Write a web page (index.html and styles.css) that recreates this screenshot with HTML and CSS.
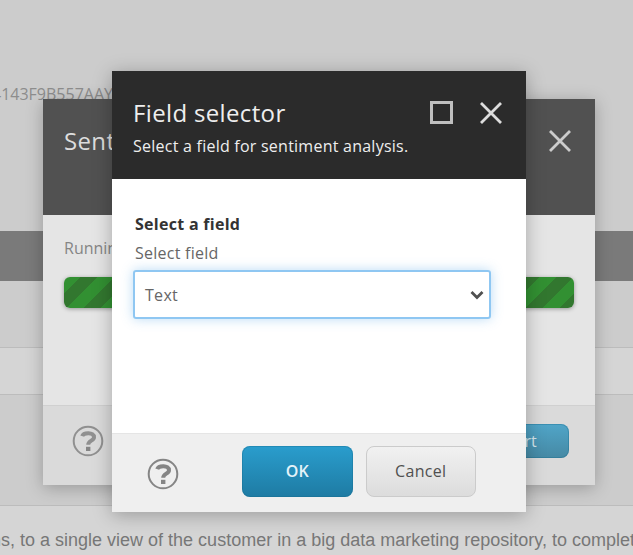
FILE: index.html
```html
<!DOCTYPE html>
<html lang="en">
<head>
<meta charset="utf-8">
<title>Field selector</title>
<link rel="stylesheet" href="styles.css">
</head>
<body>
<main class="page">
  <div class="page-top"><span class="page-id">4143F9B557AAY</span></div>
  <div class="page-bar"></div>
  <div class="page-row"></div>
  <div class="page-row page-row-light"></div>
  <div class="page-row page-row-tall"></div>
  <div class="page-copy"><span>ns, to a single view of the customer in a big data marketing repository, to complete</span></div>
</main>

<section class="dialog dialog-back">
  <header class="dialog-header">
    <h2 class="title">Sentiment</h2>
    <svg class="icon-close" viewBox="0 0 24 24"><path d="M2 2L22 22M22 2L2 22"/></svg>
  </header>
  <div class="dialog-body">
    <p class="status">Running</p>
    <div class="progress"></div>
  </div>
  <footer class="dialog-footer">
    <svg class="icon-help" viewBox="0 0 32 32"><circle cx="16" cy="16" r="14.3"/><path d="M10.2 11.2C11.5 7.2 22 6.8 22 12.2C22 15.8 16.2 15.6 16.2 19.8"/><path class="dot" d="M14 21.8h4.4v4.2h-4.4z"/></svg>
    <button class="button button-primary">Start</button>
  </footer>
</section>

<section class="dialog dialog-front">
  <header class="dialog-header">
    <div>
      <h2 class="title">Field selector</h2>
      <p class="subtitle">Select a field for sentiment analysis.</p>
    </div>
    <div class="window-controls">
      <span class="icon-maximize"></span>
      <svg class="icon-close" viewBox="0 0 24 24"><path d="M2 2L22 22M22 2L2 22"/></svg>
    </div>
  </header>
  <div class="dialog-body">
    <h3 class="group-title">Select a field</h3>
    <p class="field-label">Select field</p>
    <div class="select"><span>Text</span><svg class="icon-chevron" viewBox="0 0 14 10"><path d="M1.5 2L7 7.5L12.5 2"/></svg></div>
  </div>
  <footer class="dialog-footer">
    <svg class="icon-help" viewBox="0 0 32 32"><circle cx="16" cy="16" r="14.3"/><path d="M10.2 11.2C11.5 7.2 22 6.8 22 12.2C22 15.8 16.2 15.6 16.2 19.8"/><path class="dot" d="M14 21.8h4.4v4.2h-4.4z"/></svg>
    <button class="button button-primary">OK</button>
    <button class="button button-plain">Cancel</button>
  </footer>
</section>
</body>
</html>
```
FILE: styles.css
```css
* { box-sizing: border-box; }
body {
  margin: 0;
  width: 633px;
  height: 555px;
  overflow: hidden;
  position: relative;
  font-family: "Open Sans", sans-serif;
}
h2, h3, p { margin: 0; }
svg { display: block; fill: none; flex: none; }

.page { height: 555px; background: #ccc; overflow: hidden; }
.page-top { height: 231px; padding-top: 83px; }
.page-id {
  display: block;
  margin-left: -8px;
  font-size: 16px;
  line-height: 22px;
  color: #8d8d8d;
}
.page-bar { height: 50px; background: #7a7a7a; }
.page-row { height: 67px; border-bottom: 1px solid #bcbcbc; }
.page-row-light { height: 47px; background: #d5d5d5; }
.page-row-tall { height: 111px; }
.page-copy {
  height: 49px;
  padding-top: 23px;
  background: #d5d5d5;
  font: 18px/22px "Liberation Sans", sans-serif;
  color: #777;
  white-space: nowrap;
}
.page-copy span { display: block; margin-left: -9px; }

.dialog {
  position: absolute;
  display: flex;
  flex-direction: column;
  background: #fff;
}
.dialog-header { display: flex; justify-content: space-between; flex: none; }
.dialog-body { flex: 1; }
.dialog-footer { display: flex; align-items: center; flex: none; }
.title { font-size: 24px; line-height: 32px; font-weight: 400; letter-spacing: .35px; white-space: nowrap; }

.dialog-back {
  left: 43px;
  top: 99px;
  width: 552px;
  height: 386px;
  background: #e5e5e5;
  box-shadow: 0 3px 16px rgba(0, 0, 0, .25);
}
.dialog-back .dialog-header { height: 116px; padding: 26px 23px 0 21px; background: #515151; color: #ddd; }
.dialog-back .dialog-body { padding: 22px 21px 0; }
.dialog-back .dialog-footer {
  height: 80px;
  padding: 0 26px 9px 29px;
  justify-content: space-between;
  background: #dadada;
  border-top: 1px solid #d0d0d0;
}
.status { font-size: 16px; line-height: 22px; color: #858585; }
.progress {
  height: 31px;
  margin-top: 18px;
  border-radius: 6px;
  background: repeating-linear-gradient(135deg, #329032 0 12px, #32772f 12px 24px);
  box-shadow: 0 1px 4px rgba(0, 0, 0, .35);
}

.dialog-front {
  left: 112px;
  top: 71px;
  width: 414px;
  height: 441px;
  box-shadow: 0 3px 18px rgba(0, 0, 0, .28);
}
.dialog-front .dialog-header { height: 108px; padding: 26px 23px 0 21px; background: #2b2b2b; color: #eee; }
.dialog-front .dialog-body { padding: 34px 35px 0 21px; }
.dialog-front .dialog-footer { height: 79px; padding: 0 50px 4px 35px; background: #efefef; border-top: 1px solid #e5e5e5; }
.subtitle { font-size: 16px; line-height: 22px; margin-top: 6px; letter-spacing: .24px; white-space: nowrap; }
.window-controls { display: flex; gap: 26px; padding-top: 4px; }
.icon-maximize { width: 23px; height: 23px; border: 3px solid #bfbfbf; }
.icon-close { width: 24px; height: 24px; stroke: #ddd; stroke-width: 2.8; }
.dialog-back .icon-close { margin-top: 4px; stroke: #ccc; }
.group-title { padding-left: 2px; font-size: 16px; line-height: 22px; letter-spacing: .28px; color: #333; }
.field-label { padding-left: 2px; margin-top: 7px; font-size: 16px; line-height: 22px; letter-spacing: .25px; color: #666; }
.select {
  display: flex;
  align-items: center;
  justify-content: space-between;
  height: 49px;
  margin-top: 6px;
  padding: 0 5px 0 10px;
  border: 2px solid #8fc7f2;
  border-radius: 3px;
  box-shadow: 0 0 12px rgba(102, 175, 233, .45);
  font-size: 16px;
  letter-spacing: .3px;
  color: #666;
}
.icon-chevron { width: 14px; height: 10px; stroke: #505050; stroke-width: 2.8; }
.icon-help { width: 32px; height: 32px; stroke: #858585; stroke-width: 2; }
.icon-help path { stroke-width: 4; }
.icon-help .dot { fill: #858585; stroke: none; }
.dialog-back .icon-help { stroke: #909090; }
.dialog-front .icon-help { margin-top: 6px; }

.button {
  height: 51px;
  width: 111px;
  padding: 0;
  border: 0;
  border-radius: 8px;
  font: 600 16px "Open Sans", sans-serif;
}
.button-primary {
  margin-left: 63px;
  background: linear-gradient(#2a9dcd, #1e7ba3);
  box-shadow: inset 0 0 0 1px rgba(20, 105, 140, .35);
  color: #e4f3f9;
}
.button-plain {
  margin-left: 13px;
  background: linear-gradient(#f1f1f1, #dcdcdc);
  border: 1.5px solid #cbcbcb;
  color: #505050;
  font-weight: 400;
  letter-spacing: .3px;
}
.dialog-back .button-primary {
  width: 100px;
  height: 34px;
  background: linear-gradient(#50a5c8, #4689a4);
  color: #d5e6ed;
  font-weight: 400;
}
```
